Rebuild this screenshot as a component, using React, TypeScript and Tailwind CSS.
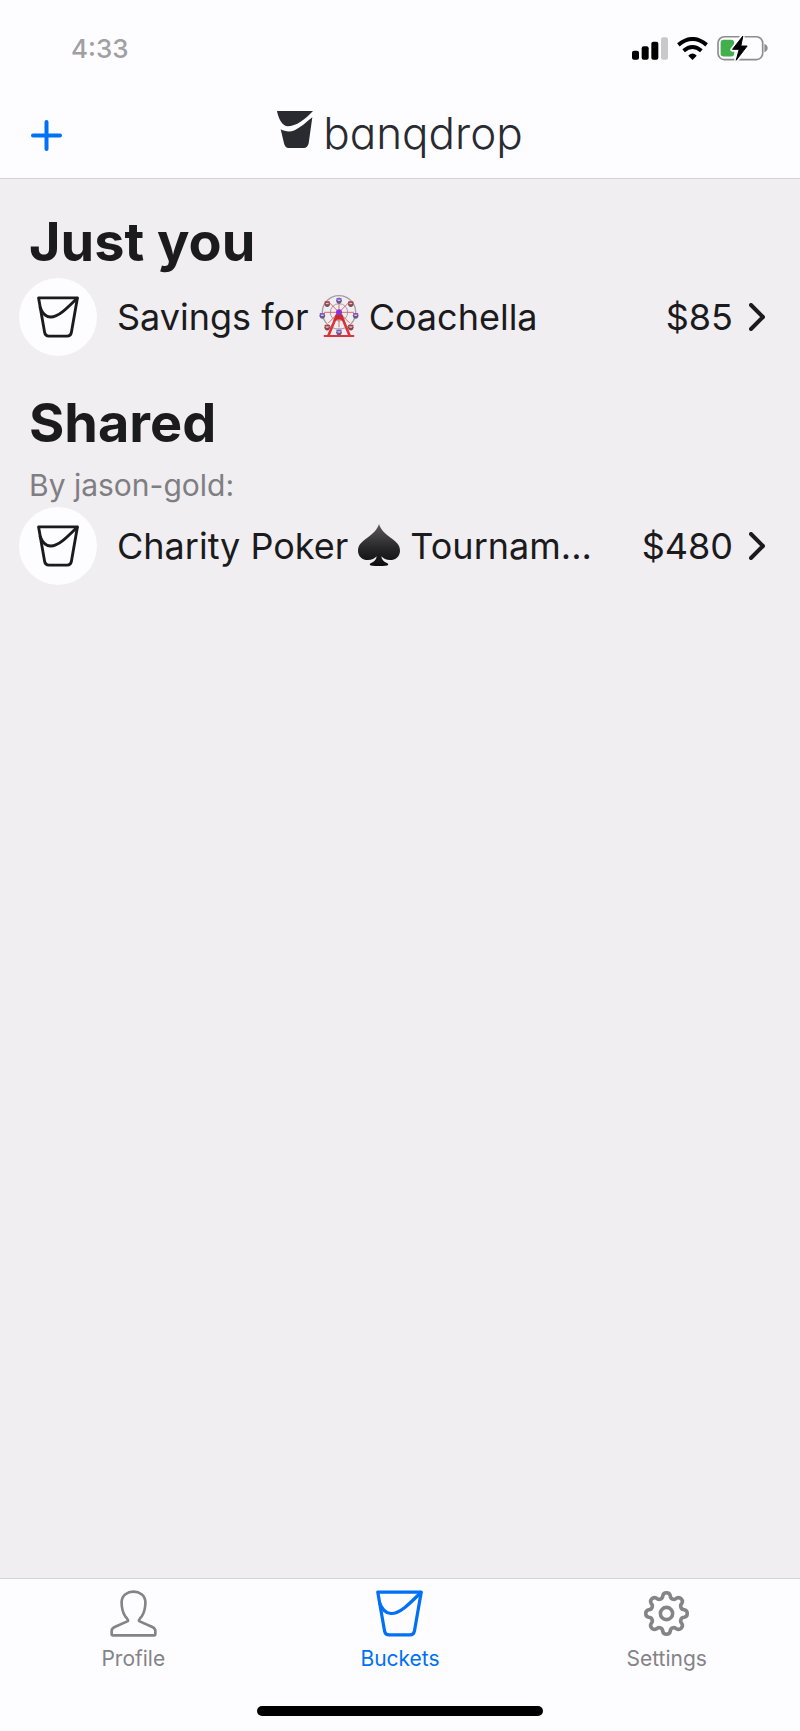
import React from "react";

interface Bucket {
  id: string;
  label: string;
  before: string;
  emoji: React.ReactNode;
  after: string;
  amount: string;
}

function BucketIcon({
  className,
  strokeWidth,
}: {
  className: string;
  strokeWidth: number;
}) {
  return (
    <svg
      viewBox="0 0 132 132"
      className={className}
      fill="none"
      stroke="currentColor"
      strokeWidth={strokeWidth}
      strokeLinejoin="round"
      strokeLinecap="round"
      aria-hidden="true"
    >
      <path d="M5 6H127L108 115Q106 126 95 126H37Q26 126 24 115Z" />
      <path d="M10 36C16 52 26 65 42 66C66 67 94 39 126 7" />
    </svg>
  );
}

function LogoMark() {
  return (
    <svg
      viewBox="0 0 108 111"
      className="h-[37px] w-9"
      fill="#2a2a31"
      aria-hidden="true"
    >
      <path d="M0 0H108C84 25 58 46 31 46C14 43 4 22 0 0Z" />
      <path d="M106 19L95 97Q92 111 80 111H35Q24 111 21 97L11 55C23 62 39 64 53 58C72 49 88 33 106 19Z" />
    </svg>
  );
}

const CABINS = [0, 45, 90, 135, 180, 225, 270, 315];

function FerrisWheel() {
  return (
    <svg
      viewBox="0 0 120 132"
      className="mx-2.5 inline-block h-11 w-10 align-[-8px]"
      role="img"
      aria-label="Ferris wheel"
    >
      <g fill="none" stroke="#a3a0a8" strokeWidth="4">
        <circle cx="60" cy="55" r="50" />
        <circle cx="60" cy="55" r="26" strokeWidth="3" />
      </g>
      {CABINS.map((angle) => (
        <line
          key={angle}
          x1="60"
          y1="55"
          x2="60"
          y2="10"
          stroke="#e2504d"
          strokeWidth="2.5"
          transform={`rotate(${angle} 60 55)`}
        />
      ))}
      {CABINS.map((angle) => {
        const rad = (angle * Math.PI) / 180;
        const x = 60 + 50 * Math.sin(rad);
        const y = 55 - 50 * Math.cos(rad) + (angle === 0 ? 14 : 9);
        const color = angle % 90 === 0 ? "#8058c8" : "#c0353a";
        return (
          <g key={angle}>
            <rect x={x - 8} y={y - 7} width="16" height="6" rx="2" fill={color} />
            <path
              d={`M${x - 9} ${y - 1}h18q-1 11 -9 11t-9 -11Z`}
              fill={angle % 90 === 0 ? "#6a568f" : "#83474f"}
            />
            <rect x={x - 4} y={y - 2} width="8" height="4" fill="#cfcbd6" />
          </g>
        );
      })}
      <path
        d="M55 60L28 125M65 60L92 125"
        stroke="#dc3438"
        strokeWidth="8"
        fill="none"
      />
      <path d="M51 62H69L77 83Q60 70 43 83Z" fill="#c92b31" />
      <rect x="14" y="123" width="92" height="6" rx="2" fill="#d9353a" />
      <circle cx="60" cy="55" r="9" fill="#8a35d6" />
    </svg>
  );
}

function Spade() {
  return (
    <svg
      viewBox="0 0 126 126"
      className="mx-2.5 inline-block size-[42px] align-[-7px]"
      role="img"
      aria-label="Spade"
    >
      <defs>
        <linearGradient id="spade" x1="0" y1="0" x2="0" y2="1">
          <stop offset="0" stopColor="#5a595c" />
          <stop offset="0.55" stopColor="#29282b" />
          <stop offset="1" stopColor="#0c0b0d" />
        </linearGradient>
      </defs>
      <path
        fill="url(#spade)"
        d="M63 0C68 16 80 28 96 40C113 52 126 62 126 80C126 97 113 108 96 108C85 108 76 104 70 97C71 108 78 114 87 117Q93 120 90 123Q88 126 63 126T36 123Q33 120 39 117C48 114 55 108 56 97C50 104 41 108 30 108C13 108 0 97 0 80C0 62 13 52 30 40C46 28 58 16 63 0Z"
      />
    </svg>
  );
}

function ProfileIcon() {
  return (
    <svg
      viewBox="0 0 142 142"
      className="size-[47px]"
      fill="none"
      stroke="currentColor"
      strokeWidth="8"
      strokeLinejoin="round"
      aria-hidden="true"
    >
      <path d="M54 94C56 89 51 86 46 79C38 67 35 50 35 36C36 16 53 5 71 5S106 16 107 36C107 50 104 67 96 79C91 86 86 89 88 94L128 112Q137 116 137 124V133Q137 137 133 137H9Q5 137 5 133V124Q5 116 14 112Z" />
    </svg>
  );
}

// eight rounded teeth joined by inverted arcs
const gearPath = (() => {
  const point = (x: number, y: number, angle: number) => {
    const a = (angle * Math.PI) / 180;
    const px = x * Math.cos(a) - y * Math.sin(a);
    const py = x * Math.sin(a) + y * Math.cos(a);
    return `${px.toFixed(2)} ${py.toFixed(2)}`;
  };
  let d = `M${point(17.4, -3.7, 0)}`;
  for (let i = 0; i < 8; i++) {
    d += `A3.8 3.8 0 0 1 ${point(17.4, 3.7, i * 45)}`;
    d += `A3.5 3.5 0 0 0 ${point(17.4, -3.7, (i + 1) * 45)}`;
  }
  return d + "Z";
})();

function SettingsIcon() {
  return (
    <svg
      viewBox="-23 -23 46 46"
      className="size-[47px]"
      fill="none"
      stroke="currentColor"
      strokeWidth="3.5"
      strokeLinejoin="round"
      aria-hidden="true"
    >
      <path d={gearPath} />
      <circle r="6" />
    </svg>
  );
}

function StatusBar() {
  return (
    <div className="flex h-24 items-center justify-between pr-8 pl-[71px]">
      <span className="text-[26px] font-medium text-[#a09fa2]">4:33</span>
      <div className="flex items-center gap-[9px]">
        <svg viewBox="0 0 108 69" className="h-[23px] w-9" aria-hidden="true">
          <rect x="0" y="41" width="21" height="27" rx="6" />
          <rect x="29" y="28" width="21" height="40" rx="6" />
          <rect x="58" y="14" width="21" height="54" rx="6" />
          <rect x="87" y="1" width="21" height="67" rx="6" fill="#c9c8cb" />
        </svg>
        <svg
          viewBox="0 0 94 70"
          className="h-[23px] w-[31px]"
          fill="none"
          stroke="black"
          aria-hidden="true"
        >
          <path d="M4 24Q47 -12 90 24" strokeWidth="12" />
          <path d="M20 42Q47 19 74 42" strokeWidth="12" />
          <path d="M34 57Q47 44 60 57L47 70Z" fill="black" stroke="none" />
        </svg>
        <svg viewBox="0 0 154 78" className="h-[26px] w-[51px]" aria-hidden="true">
          <rect
            x="3"
            y="5"
            width="135"
            height="69"
            rx="19"
            fill="none"
            stroke="#8d8c90"
            strokeWidth="5"
          />
          <path d="M143 27Q153 30 153 39T143 52Z" fill="#8d8c90" />
          <rect x="11" y="14" width="41" height="51" rx="10" fill="#41b04c" />
          <path
            d="M78 1L46 44H66L58 77L92 32H72Z"
            stroke="#fdfcff"
            strokeWidth="12"
            strokeLinejoin="round"
          />
          <path
            d="M78 3L47 43H67L58 76L91 33H72Z"
            stroke="black"
            strokeWidth="3"
            strokeLinejoin="round"
          />
        </svg>
      </div>
    </div>
  );
}

function BucketRow({ bucket }: { bucket: Bucket }) {
  return (
    <a href={`#${bucket.id}`} aria-label={bucket.label} className="flex items-center">
      <span className="flex size-[78px] shrink-0 items-center justify-center rounded-full bg-[#fdfcff]">
        <BucketIcon className="size-[42px]" strokeWidth={9} />
      </span>
      <span className="mr-4 ml-5 min-w-0 flex-1 truncate text-4xl leading-[48px]">
        {bucket.before}
        {bucket.emoji}
        {bucket.after}
      </span>
      <span className="text-4xl leading-[48px]">{bucket.amount}</span>
      <svg
        viewBox="0 0 16 28"
        className="ml-4 h-7 w-4"
        fill="none"
        stroke="currentColor"
        strokeWidth="4"
        strokeLinecap="round"
        strokeLinejoin="round"
        aria-hidden="true"
      >
        <path d="M2 2L14 14L2 26" />
      </svg>
    </a>
  );
}

const savings: Bucket = {
  id: "savings",
  label: "Savings for Coachella",
  before: "Savings for",
  emoji: <FerrisWheel />,
  after: "Coachella",
  amount: "$85",
};

const poker: Bucket = {
  id: "poker",
  label: "Charity Poker Tournam...",
  before: "Charity Poker",
  emoji: <Spade />,
  after: "Tournam...",
  amount: "$480",
};

const tabs = [
  { name: "Profile", icon: <ProfileIcon />, active: false },
  {
    name: "Buckets",
    icon: <BucketIcon className="size-[47px]" strokeWidth={9} />,
    active: true,
  },
  { name: "Settings", icon: <SettingsIcon />, active: false },
];

function App() {
  return (
    <div className="flex min-h-screen flex-col bg-[#f0eef1] font-['Inter','Liberation_Sans',sans-serif] text-[#1b1a1d]">
      <header className="border-b border-[#d3d2d6] bg-[#fdfcff]">
        <StatusBar />
        <div className="grid h-[82px] grid-cols-[1fr_auto_1fr] items-start px-[31px]">
          <button
            type="button"
            aria-label="Add bucket"
            className="mt-6 w-fit text-[#0070f5]"
          >
            <svg
              viewBox="0 0 31 31"
              className="size-[31px]"
              stroke="currentColor"
              strokeWidth="4"
              strokeLinecap="round"
              aria-hidden="true"
            >
              <path d="M15.500 2V29M2 15.500H29" />
            </svg>
          </button>
          <div className="flex items-start gap-2.5 pt-[15px]">
            <LogoMark />
            <span className="text-[44px] leading-[44px] font-light text-[#2a2a31] [font-feature-settings:'cv11']">
              banqdrop
            </span>
          </div>
        </div>
      </header>

      <main className="flex-1 pt-[31px] pr-[35px] pl-[19px]">
        <section>
          <h2 className="mb-1 pl-2.5 text-[54px] leading-[64px] font-bold">
            Just you
          </h2>
          <BucketRow bucket={savings} />
        </section>
        <section className="mt-[35px]">
          <h2 className="pl-2.5 text-[54px] leading-[64px] font-bold">Shared</h2>
          <p className="mt-3 mb-1 pl-2.5 text-3xl text-[#7f7e83]">
            By jason-gold:
          </p>
          <BucketRow bucket={poker} />
        </section>
      </main>

      <footer className="border-t border-[#d3d2d6] bg-[#fdfcff]">
        <nav className="grid grid-cols-3 pt-[11px]">
          {tabs.map((tab) => (
            <button
              key={tab.name}
              type="button"
              className={`flex flex-col items-center gap-2 text-[21px] leading-7 ${
                tab.active ? "text-[#0070f5]" : "text-[#848387]"
              }`}
            >
              {tab.icon}
              {tab.name}
            </button>
          ))}
        </nav>
        <div className="mx-auto mt-[33px] mb-[15px] h-2.5 w-[286px] rounded-full bg-black" />
      </footer>
    </div>
  );
}

export default App;
